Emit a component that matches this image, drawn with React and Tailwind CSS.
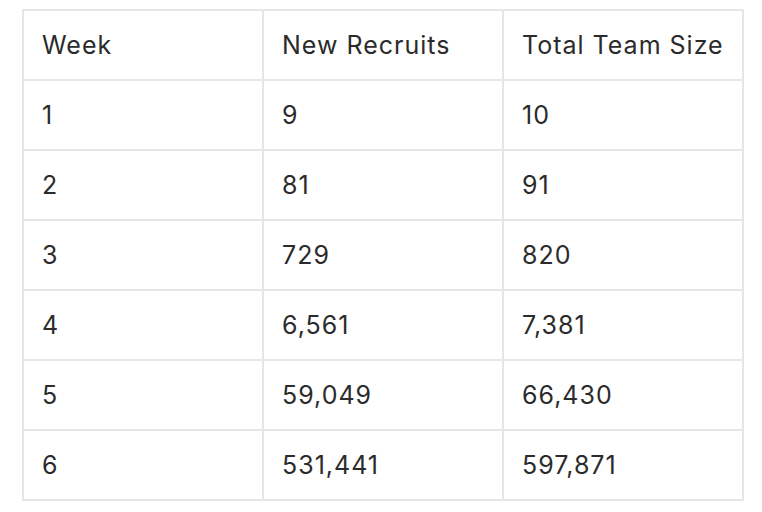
const rows = [
  ['1', '9', '10'],
  ['2', '81', '91'],
  ['3', '729', '820'],
  ['4', '6,561', '7,381'],
  ['5', '59,049', '66,430'],
  ['6', '531,441', '597,871'],
]

export default function App() {
  return (
    <div className="w-[762px] h-[512px] bg-white pt-[9px] pl-[22px]" style={{ fontFamily: 'Inter, "Noto Sans", sans-serif' }}>
      <table className="border-collapse text-[25px] tracking-[1px] text-[#2b2b2b]">
        <thead>
          <tr>
            {['Week', 'New Recruits', 'Total Team Size'].map(h => (
              <th key={h} className="w-[240px] h-[70px] border-2 border-[#e6e6e6] px-[18px] pt-[2px] text-left font-normal">
                {h}
              </th>
            ))}
          </tr>
        </thead>
        <tbody>
          {rows.map((r, i) => (
            <tr key={i}>
              {r.map((c, j) => (
                <td key={j} className="w-[240px] h-[70px] border-2 border-[#e6e6e6] px-[18px] pt-[2px]">
                  {c}
                </td>
              ))}
            </tr>
          ))}
        </tbody>
      </table>
    </div>
  )
}
